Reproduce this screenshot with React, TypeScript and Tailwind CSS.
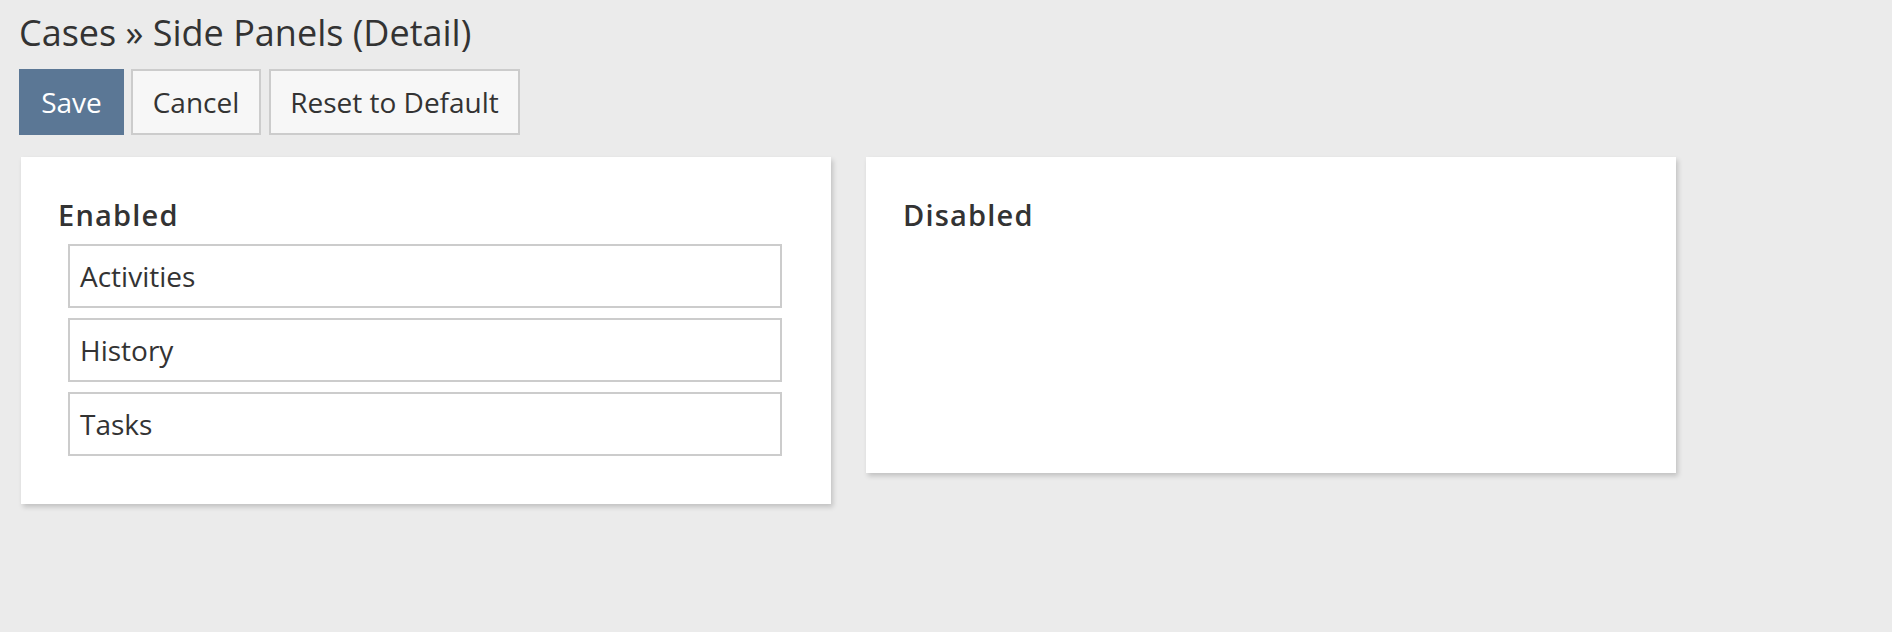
import React from "react";

const font = { fontFamily: '"Open Sans", "Noto Sans", sans-serif' };

type PanelProps = {
  title: string;
  items: string[];
  minListHeight?: boolean;
};

function Panel({ title, items, minListHeight }: PanelProps) {
  return (
    <section className="w-[810px] bg-white pt-[38px] pb-[48px] px-[37px] shadow-[2px_3px_5px_rgba(0,0,0,0.18)]">
      <h2 className="text-[29px] leading-[39px] font-semibold tracking-[1.2px] text-[#333]">
        {title}
      </h2>
      <ul
        className={
          minListHeight
            ? "mt-[10px] ml-[10px] mr-[12px] flex min-h-[181px] flex-col gap-[10px]"
            : "mt-[10px] ml-[10px] mr-[12px] flex flex-col gap-[10px]"
        }
      >
        {items.map((item) => (
          <li
            key={item}
            className="flex h-[64px] items-center border-2 border-[#cccccc] bg-white px-[10px] text-[28px] text-[#333]"
          >
            {item}
          </li>
        ))}
      </ul>
    </section>
  );
}

export default function App() {
  return (
    <main
      className="min-h-[632px] w-full bg-[#ebebeb] pl-[19px] pt-[12px] text-[#333]"
      style={font}
    >
      <h1 className="text-[36px] leading-[42px] font-normal text-[#333]">
        Cases » Side Panels (Detail)
      </h1>

      <div className="mt-[15px] flex gap-[7px]">
        <button className="flex h-[66px] w-[105px] items-center justify-center border-2 border-[#5b7795] bg-[#5b7795] text-[28px] text-white">
          Save
        </button>
        <button className="flex h-[66px] w-[130px] items-center justify-center border-2 border-[#cccccc] bg-[#f7f7f7] text-[28px] text-[#333]">
          Cancel
        </button>
        <button className="ml-[1px] flex h-[66px] w-[251px] items-center justify-center border-2 border-[#cccccc] bg-[#f7f7f7] text-[28px] text-[#333]">
          Reset to Default
        </button>
      </div>

      <div className="mt-[22px] ml-[2px] flex items-start gap-[35px]">
        <Panel title="Enabled" items={["Activities", "History", "Tasks"]} />
        <Panel title="Disabled" items={[]} minListHeight />
      </div>
    </main>
  );
}
